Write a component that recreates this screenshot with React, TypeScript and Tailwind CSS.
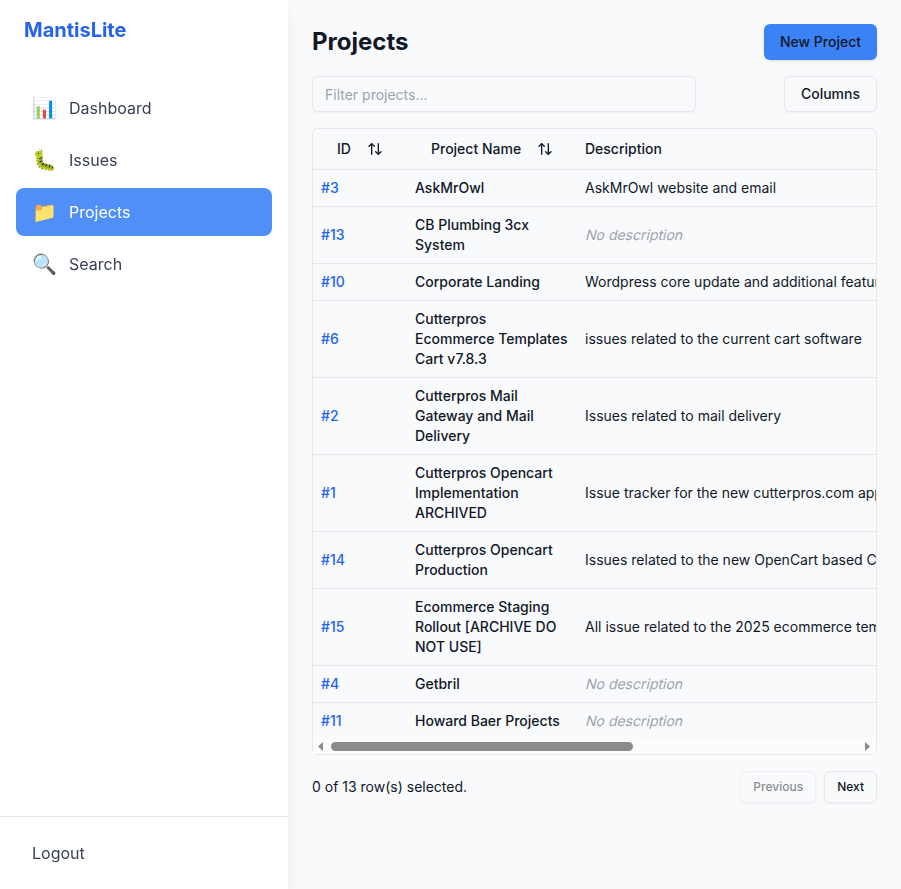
import { ArrowUpDown } from "lucide-react";

const navItems = [
  { icon: "📊", label: "Dashboard" },
  { icon: "🐛", label: "Issues" },
  { icon: "📁", label: "Projects", active: true },
  { icon: "🔍", label: "Search" },
];

const projects = [
  { id: 3, name: "AskMrOwl", description: "AskMrOwl website and email" },
  { id: 13, name: "CB Plumbing 3cx System", description: "" },
  { id: 10, name: "Corporate Landing", description: "Wordpress core update and additional features" },
  { id: 6, name: "Cutterpros Ecommerce Templates Cart v7.8.3", description: "issues related to the current cart software" },
  { id: 2, name: "Cutterpros Mail Gateway and Mail Delivery", description: "Issues related to mail delivery" },
  { id: 1, name: "Cutterpros Opencart Implementation ARCHIVED", description: "Issue tracker for the new cutterpros.com app" },
  { id: 14, name: "Cutterpros Opencart Production", description: "Issues related to the new OpenCart based Cutterpros" },
  { id: 15, name: "Ecommerce Staging Rollout [ARCHIVE DO NOT USE]", description: "All issue related to the 2025 ecommerce template" },
  { id: 4, name: "Getbril", description: "" },
  { id: 11, name: "Howard Baer Projects", description: "" },
];

function SortHeader({ label }: { label: string }) {
  return (
    <button className="flex h-9 items-center gap-4 whitespace-nowrap px-4 font-medium">
      {label}
      <ArrowUpDown className="size-4 shrink-0" />
    </button>
  );
}

function Sidebar() {
  return (
    <aside className="z-10 flex w-72 shrink-0 flex-col bg-white shadow-[0_10px_15px_-3px_rgba(0,0,0,0.1),0_4px_6px_-4px_rgba(0,0,0,0.1)] will-change-transform">
      <div className="flex h-[60px] items-center px-6 text-xl font-bold text-[#2563eb]">MantisLite</div>
      <nav className="flex flex-1 flex-col gap-1 px-4 pt-6">
        {navItems.map((item) => (
          <a
            key={item.label}
            className={
              item.active
                ? "flex h-12 items-center rounded-lg bg-[#4f8ff7] px-4 text-white"
                : "flex h-12 items-center rounded-lg px-4 text-[#374151]"
            }
          >
            <span className="mr-3 w-[25px] text-xl">{item.icon}</span>
            {item.label}
          </a>
        ))}
      </nav>
      <div className="h-[73px] border-t border-[#e5e7eb] p-4">
        <button className="h-10 px-4 text-[#374151]">Logout</button>
      </div>
    </aside>
  );
}

function ScrollBar() {
  return (
    <div className="flex h-[15px] items-center bg-[#fcfcfc] pl-[5px] pr-[6px]">
      <svg className="h-[9px] w-[5px]" viewBox="0 0 5 9" fill="#8b8b8b"><path d="M5 0v9L0 4.5z" /></svg>
      <div className="ml-2 h-[9px] w-[302px] rounded-full bg-[#8b8b8b]" />
      <svg className="ml-auto h-[9px] w-[5px]" viewBox="0 0 5 9" fill="#8b8b8b"><path d="M0 0v9l5-4.5z" /></svg>
    </div>
  );
}

export default function App() {
  return (
    <div className="flex h-[889px] w-[901px] overflow-hidden bg-[#f9fafc] font-['Inter',sans-serif] text-[#111827]">
      <Sidebar />
      <main className="flex min-w-0 flex-1 flex-col p-6 text-sm">
        <div className="flex h-9 items-center justify-between">
          <h1 className="text-2xl font-bold">Projects</h1>
          <button className="h-9 rounded-md bg-[#3b82f6] px-4 font-medium shadow-[0_1px_3px_0_rgba(0,0,0,0.1),0_1px_2px_-1px_rgba(0,0,0,0.1)]">
            New Project
          </button>
        </div>
        <div className="mt-4 flex items-center justify-between">
          <input
            className="h-9 w-96 rounded-md border border-[#e5e7eb] bg-transparent px-3 py-1 shadow-[0_1px_2px_0_rgba(0,0,0,0.05)] outline-none placeholder:text-[#9ca3af]"
            placeholder="Filter projects..."
          />
          <button className="h-9 rounded-md border border-[#e5e7eb] px-4 font-medium shadow-[0_1px_2px_0_rgba(0,0,0,0.05)]">
            Columns
          </button>
        </div>
        <div className="mt-4 rounded-md border border-[#e5e7eb]">
          <div className="overflow-hidden">
            <table className="w-[960px] table-fixed text-left">
              <colgroup>
                <col className="w-[94px]" />
                <col className="w-[170px]" />
                <col />
              </colgroup>
              <thead>
                <tr className="border-b border-[#e5e7eb]">
                  <th className="h-10 px-2 py-0 font-medium"><SortHeader label="ID" /></th>
                  <th className="h-10 px-2 py-0 font-medium"><SortHeader label="Project Name" /></th>
                  <th className="h-10 px-2 py-0 font-medium">Description</th>
                </tr>
              </thead>
              <tbody>
                {projects.map((p) => (
                  <tr key={p.id} className="border-b border-[#e5e7eb] last:border-0">
                    <td className="p-2 font-medium text-[#2563eb]">#{p.id}</td>
                    <td className="p-2 font-medium">{p.name}</td>
                    <td className="whitespace-nowrap p-2">
                      {p.description || (
                        <span className="inline-block origin-[0_15px] -skew-x-[14deg] align-top text-[#9ca3af]">
                          No description
                        </span>
                      )}
                    </td>
                  </tr>
                ))}
              </tbody>
            </table>
          </div>
          <ScrollBar />
        </div>
        <div className="mt-4 flex items-center gap-2">
          <span className="flex-1">0 of 13 row(s) selected.</span>
          <button className="h-8 rounded-md border border-[#e5e7eb] px-3 text-xs font-medium opacity-50 shadow-[0_1px_2px_0_rgba(0,0,0,0.05)]">
            Previous
          </button>
          <button className="h-8 rounded-md border border-[#e5e7eb] px-3 text-xs font-medium shadow-[0_1px_2px_0_rgba(0,0,0,0.05)]">
            Next
          </button>
        </div>
      </main>
    </div>
  );
}
